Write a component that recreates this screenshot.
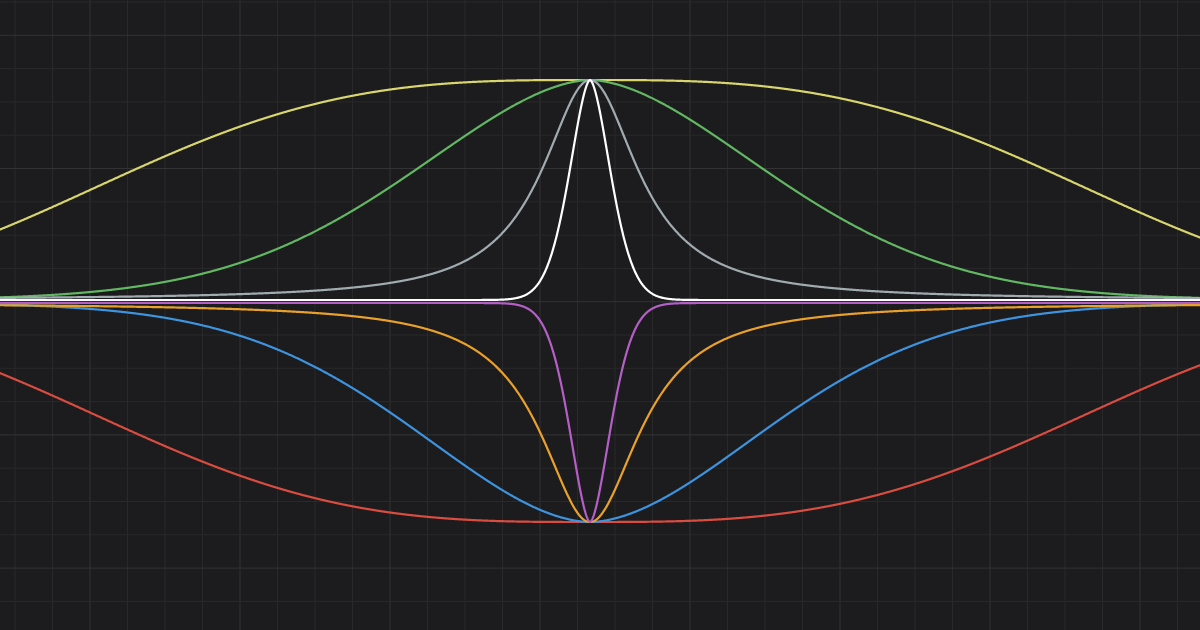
const CX = 590;

type Curve = { color: string; dir: 1 | -1; f: (d: number) => number };

// shapes measured off the reference
const superG = (a: number, p: number) => (d: number) => Math.exp(-Math.pow(Math.abs(d) / a, p));
const lor = (w: number) => (d: number) => 1 / (1 + (d / w) * (d / w));

const curves: Curve[] = [
  { color: "#d94c40", dir: -1, f: superG(565, 3) },
  { color: "#3d93dd", dir: -1, f: superG(245, 1.8) },
  { color: "#e9a12c", dir: -1, f: lor(60) },
  { color: "#b35fc6", dir: -1, f: superG(29, 1.7) },
  { color: "#d7d56c", dir: 1, f: superG(565, 3) },
  { color: "#62b862", dir: 1, f: superG(252, 1.75) },
  { color: "#a0abb0", dir: 1, f: lor(58) },
  { color: "#ffffff", dir: 1, f: superG(29.5, 1.7) },
];

function path(c: Curve) {
  const b = c.dir === 1 ? 300 : 303;
  const peak = c.dir === 1 ? 80 : 522;
  const amp = peak - b;
  const pts: string[] = [];
  for (let x = -2; x <= 1202; x += 0.5) {
    const y = b + amp * c.f(x - CX);
    pts.push(`${x},${y.toFixed(2)}`);
  }
  return "M" + pts.join(" L");
}

function Grid() {
  const v: number[] = [];
  for (let x = 15; x < 1200; x += 37.5) v.push(x);
  const h: number[] = [];
  for (let y = 2; y < 630; y += 33.3) h.push(y);
  return (
    <g>
      {v.map((x, i) => (
        <line key={"v" + i} x1={x} x2={x} y1={0} y2={630} stroke={(i - 2) % 4 === 0 ? "#333336" : "#29292b"} strokeWidth={1} />
      ))}
      {h.map((y, i) => (
        <line key={"h" + i} x1={0} x2={1200} y1={y} y2={y} stroke={(i - 1) % 4 === 0 ? "#333336" : "#29292b"} strokeWidth={1} />
      ))}
    </g>
  );
}

export default function App() {
  return (
    <div className="w-[1200px] h-[630px] bg-[#1c1c1e] overflow-hidden">
      <svg width="1200" height="630" viewBox="0 0 1200 630" className="block">
        <Grid />
        {curves.map((c, i) => (
          <path key={i} d={path(c)} fill="none" stroke={c.color} strokeWidth={2.2} strokeLinejoin="round" />
        ))}
      </svg>
    </div>
  );
}
